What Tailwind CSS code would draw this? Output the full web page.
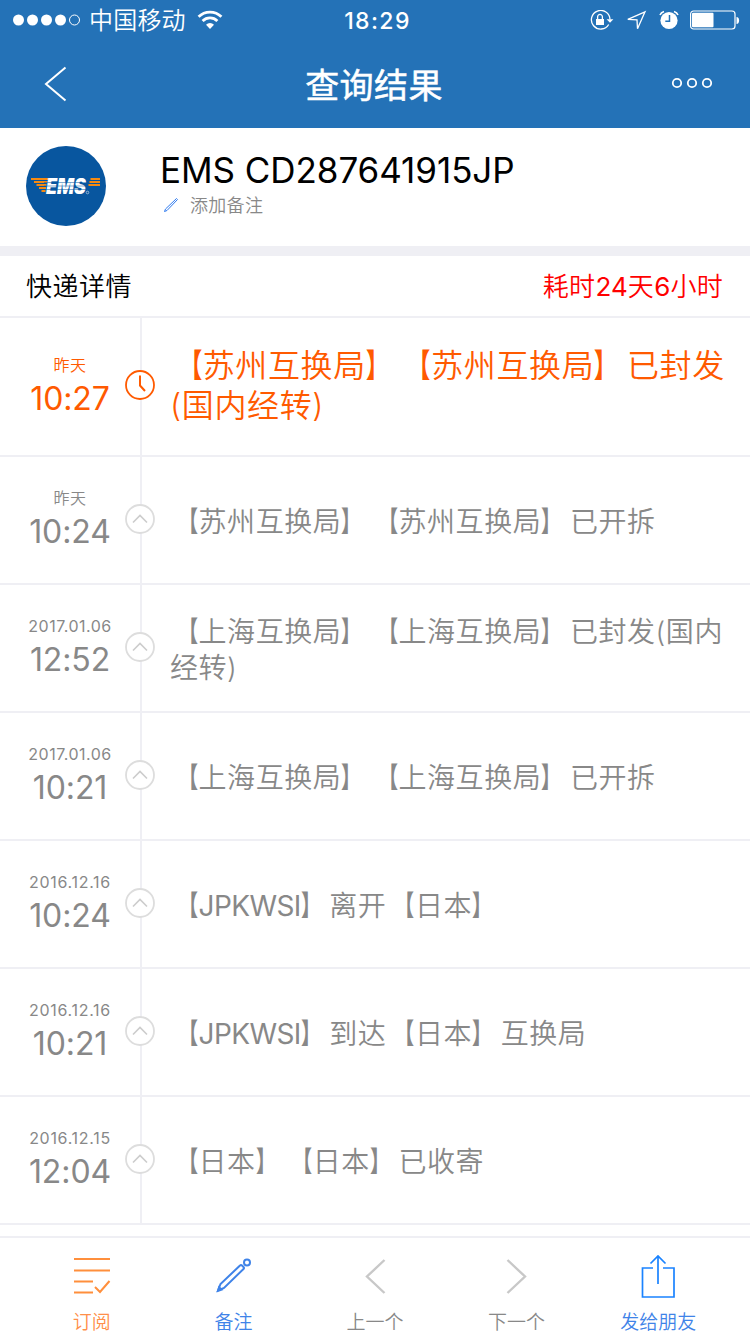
<!DOCTYPE html>
<html lang="zh-CN">
<head>
  <meta charset="UTF-8">
  <title>查询结果</title>
  <script src="https://cdn.jsdelivr.net/npm/@tailwindcss/browser@4"></script>
</head>
<body class="w-[750px] h-[1334px] overflow-hidden bg-white flex flex-col font-['Inter','Noto_Sans_CJK_SC',sans-serif] font-[350] [text-spacing-trim:space-all]">

  <!-- Header -->
  <header class="h-[128px] shrink-0 bg-[#2472b7] text-white">
    <div class="h-10 pl-[13px] pr-[10px] grid grid-cols-[1fr_auto_1fr] grid-rows-[40px] items-center">
      <div class="flex items-center">
        <svg class="w-[68px] h-3" viewBox="0 0 68 12" fill="#fff">
          <circle cx="5.5" cy="6" r="5.5"/><circle cx="19.5" cy="6" r="5.5"/><circle cx="33.5" cy="6" r="5.5"/><circle cx="47.5" cy="6" r="5.5"/>
          <circle cx="61.5" cy="6" r="5" fill="none" stroke="#fff"/>
        </svg>
        <span class="ml-2 pt-[2px] text-2xl leading-[38px] tracking-[0.2px]">中国移动</span>
        <svg class="ml-[11px] w-[26px] h-5" viewBox="0 0 26 20" fill="none" stroke="#fff" stroke-width="2.8">
          <path d="M1.6 6.8a16 16 0 0 1 22.8 0M5.6 11a10.5 10.5 0 0 1 14.8 0"/>
          <path d="M13 19l-4-4.3a5.8 5.8 0 0 1 8 0z" fill="#fff" stroke="none"/>
        </svg>
      </div>
      <div class="pl-[2px] pt-[2px] text-[23px] font-medium leading-[38px] tracking-[1.4px]">18:29</div>
      <div class="flex items-center justify-end">
        <svg class="w-6 h-5" viewBox="0 0 24 20" fill="none" stroke="#fff" stroke-width="1.3">
          <path d="M18.7 14.5a9.3 9.3 0 1 1 1.3-5"/>
          <path d="M16.6 9.2h6.8L20 12.8z" fill="#fff" stroke="none"/>
          <rect x="6" y="9" width="8" height="6" fill="#fff" stroke="none"/>
          <path d="M7.6 9V6.8a2.4 2.4 0 0 1 4.8 0V9"/>
        </svg>
        <svg class="ml-3 w-[21px] h-[21px]" viewBox="0 0 21 21" fill="none" stroke="#fff" stroke-width="1.3">
          <path d="M19 1.8L1.8 9.3l9.2.5.5 9z"/>
        </svg>
        <svg class="ml-3 w-5 h-5" viewBox="0 0 20 20" fill="none" stroke="#fff">
          <circle cx="10" cy="10.5" r="8.6" fill="#fff" stroke="none"/>
          <path d="M1 5Q2 2.5 5 1.5M19 5Q18 2.5 15 1.5" stroke-width="1.6"/>
          <path d="M10.5 5v6.3H6.3" stroke="#2472b7" stroke-width="1.5"/>
        </svg>
        <svg class="ml-[11px] w-[50px] h-5" viewBox="0 0 50 20">
          <rect x=".6" y="1" width="44.4" height="18" rx="3" fill="none" stroke="#fff" stroke-width="1.2"/>
          <rect x="2" y="2.8" width="21.5" height="14.4" rx="1" fill="#fff"/>
          <path d="M46.5 7c3.5 0 3.5 7 0 7z" fill="#fff"/>
        </svg>
      </div>
    </div>
    <div class="h-[88px] pl-11 pr-[37px] grid grid-cols-[1fr_auto_1fr] items-center">
      <svg class="w-6 h-9" viewBox="0 0 24 36" fill="none" stroke="#fff" stroke-width="2"><path d="M21.5 1.5L2 18l19.5 16.5"/></svg>
      <h1 class="mr-[9px] pt-[3px] text-[34px] font-normal [-webkit-text-stroke:0.5px_white] leading-[85px] tracking-[0.4px]">查询结果</h1>
      <svg class="mb-[2px] justify-self-end w-[42px] h-3" viewBox="0 0 42 12" fill="none" stroke="#fff" stroke-width="1.8">
        <circle cx="6" cy="6" r="4.2"/><circle cx="21" cy="6" r="4.2"/><circle cx="36" cy="6" r="4.2"/>
      </svg>
    </div>
  </header>

  <!-- Parcel -->
  <section class="h-[118px] shrink-0 pl-[26px] pt-[18px] flex">
    <svg class="w-20 h-20" viewBox="0 0 80 80">
      <circle cx="40" cy="40" r="40" fill="#08569f"/>
      <g stroke="#f58a12" stroke-width="2">
        <path d="M5 33h17.5M8 36h13.5M10.500 39h10M13 42h7M15.500 45h4M64.500 33h9.500M63.500 36h10.500M62.500 39h11.500"/>
      </g>
      <text x="20" y="48" font-size="21" font-weight="900" font-style="italic" textLength="40" lengthAdjust="spacingAndGlyphs" fill="#fff">EMS</text>
      <path d="M18 36.5h43M18 40h43M18 43.5h43" stroke="#08569f" stroke-width=".5"/>
      <circle cx="61.5" cy="46.5" r="1.3" fill="none" stroke="#fff" stroke-width=".5"/>
    </svg>
    <div class="ml-[54px] pt-[4px]">
      <div class="text-[35px] leading-[40px] font-normal text-black tracking-[-0.05px] whitespace-nowrap">EMS CD287641915JP</div>
      <div class="mt-[4px] flex items-center text-[#888]">
        <svg class="ml-[3px] mb-[2px] w-[16px] h-[16px]" viewBox="0 0 16 16" fill="none" stroke="#2f7bf0"><path d="M1.5 14.5l1-2.5L13.5 1.5l1 1L4 13.5z"/></svg>
        <span class="ml-[11px] text-lg leading-6 tracking-[0.3px]">添加备注</span>
      </div>
    </div>
  </section>

  <!-- Section title -->
  <div class="h-[72px] shrink-0 border-t-10 border-b-2 border-[#efeff4] px-[26px] flex items-center justify-between text-[26px]">
    <h2 class="text-black tracking-[0.5px]">快递详情</h2>
    <span class="mr-[1px] text-[#f00] tracking-[0.3px]">耗时<span class="font-normal tracking-[0.1px]">24</span>天<span class="font-normal tracking-[0.1px]">6</span>小时</span>
  </div>

  <!-- Timeline -->
  <ul id="list" class="shrink-0"></ul>

  <!-- Toolbar -->
  <nav class="mt-[11px] h-[98px] shrink-0 border-t-2 border-[#efeff4] px-[21px] pt-4 grid grid-cols-5 text-[19px] leading-6 text-center text-[#888]">
    <a class="flex flex-col items-center text-[#ff8f4a]">
      <svg class="w-11 h-11" viewBox="0 0 44 44" fill="none" stroke="#ff8f3c" stroke-width="2"><path d="M4 5h36M4 16.5h36M4 27.5h19M4 38.5h19M25 33l5 5 9.5-11"/></svg>
      <span class="mt-[13px]">订阅</span>
    </a>
    <a class="flex flex-col items-center text-[#3f83e8]">
      <svg class="w-11 h-11" viewBox="0 0 44 44" fill="none" stroke="#3f83e8" stroke-width="2"><path d="M7 36.500l2.500-6.500L29 11.500q1-1 2 0l1.500 1.500q1 1 0 2L13 34z"/><circle cx="36" cy="8.500" r="3"/><path d="M5.500 38.500l2-7 5 4.500z" fill="#3f83e8" stroke="none"/></svg>
      <span class="mt-[13px]">备注</span>
    </a>
    <a class="flex flex-col items-center">
      <svg class="w-11 h-11" viewBox="0 0 44 44" fill="none" stroke="#c8c8c8" stroke-width="2.4"><path d="M31.5 6L14 22.5 31.5 39"/></svg>
      <span class="mt-[13px]">上一个</span>
    </a>
    <a class="flex flex-col items-center">
      <svg class="w-11 h-11" viewBox="0 0 44 44" fill="none" stroke="#c8c8c8" stroke-width="2.4"><path d="M12.5 6L30 22.5 12.5 39"/></svg>
      <span class="mt-[13px]">下一个</span>
    </a>
    <a class="flex flex-col items-center text-[#3f83e8]">
      <svg class="w-11 h-11" viewBox="0 0 44 44" fill="none" stroke="#1a83ff" stroke-width="1.7"><path d="M17 14H6.5v29H38V14H27M22 30V2M14.5 9.5L22 2l7.5 7.5"/></svg>
      <span class="mt-[13px]">发给朋友</span>
    </a>
  </nav>

<script>
  const records = [
    ['昨天', '10:27', '【苏州互换局】【苏州互换局】已封发<br>(国内经转)'],
    ['昨天', '10:24', '【苏州互换局】【苏州互换局】已开拆'],
    ['2017.01.06', '12:52', '【上海互换局】【上海互换局】已封发(国内<br>经转)'],
    ['2017.01.06', '10:21', '【上海互换局】【上海互换局】已开拆'],
    ['2016.12.16', '10:24', '【<span class="font-normal tracking-[-0.6px]">JPKWSI</span>】离开【日本】'],
    ['2016.12.16', '10:21', '【<span class="font-normal tracking-[-0.6px]">JPKWSI</span>】到达【日本】互换局'],
    ['2016.12.15', '12:04', '【日本】【日本】已收寄']
  ];

  const clock = '<path d="M15 5.5V15.5L20 21" stroke-width="2"/>';
  const arrow = '<path d="M8 18.5l7-7 7 7" stroke-width="1.6"/>';

  // narrow brackets, full-width cell
  const brackets = text => text
    .replaceAll('【', '<span class="inline-block font-black origin-right scale-x-[0.7]">【</span>')
    .replaceAll('】', '<span class="inline-block font-black origin-left scale-x-[0.7]">】</span>');

  document.getElementById('list').innerHTML = records.map(([day, time, text], i) => `
    <li class="relative flex border-b-2 border-[#efeff4] ${i ? 'h-[128px] text-[#888]' : 'h-[139px] text-[#ff5a00]'}">
      <div class="w-[140px] shrink-0 text-center flex flex-col justify-center">
        <div class="text-base leading-5 ${i > 1 ? 'font-normal' : ''} ${i > 3 ? 'tracking-[0.7px]' : 'tracking-[0.5px]'}">${day}</div>
        <div class="mt-1 text-[32px] leading-[40px] font-normal tracking-[-0.1px]">${time}</div>
      </div>
      <div class="grow border-l-2 border-[#efeff4] pl-7 flex items-center whitespace-nowrap tracking-[0.02em] ${i ? 'pt-[3px] text-[28px] leading-9' : 'pb-[2px] text-[32px] leading-10'}">
        <p>${brackets(text)}</p>
      </div>
      <svg class="absolute left-[125px] w-[30px] h-[30px] ${i ? 'top-[47px]' : 'top-[52px]'}" viewBox="0 0 30 30" fill="none" stroke="${i ? '#ccc' : '#ff5a00'}">
        <circle cx="15" cy="15" r="14" fill="#fff" stroke="${i ? '#ddd' : '#ff5a00'}" stroke-width="1.8"/>${i ? arrow : clock}
      </svg>
    </li>`).join('');
</script>

</body>
</html>
